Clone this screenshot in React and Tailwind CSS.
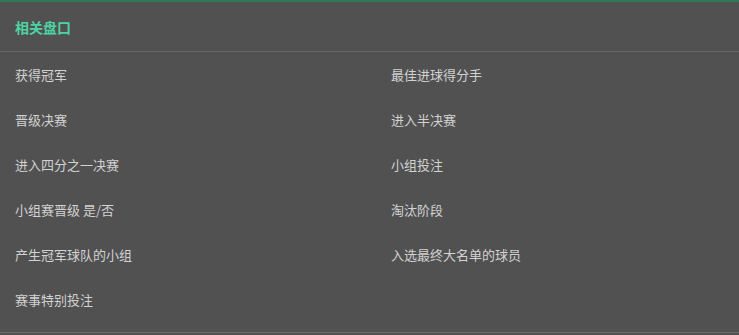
export default function App() {
  const items = [
    "获得冠军", "最佳进球得分手",
    "晋级决赛", "进入半决赛",
    "进入四分之一决赛", "小组投注",
    "小组赛晋级 是/否", "淘汰阶段",
    "产生冠军球队的小组", "入选最终大名单的球员",
    "赛事特别投注",
  ];
  return (
    <div
      className="w-[739px] h-[335px] bg-[#515151] flex flex-col"
      style={{ fontFamily: '"Noto Sans CJK SC", "Liberation Sans", sans-serif' }}
    >
      <div className="h-[2px] bg-[#2e7a58]" />
      <div className="h-[50px] flex items-center pl-[15px] border-b border-[#676767]">
        <span className="text-[14px] font-bold text-[#4ed3a5] leading-none">相关盘口</span>
      </div>
      <div className="grid grid-cols-[376px_1fr] pl-[15px] pb-[10px] border-b border-[#6a6a6a]">
        {items.map((t) => (
          <div key={t} className="h-[45px] flex items-center text-[13px] text-[#d2d2d2] leading-none">
            {t}
          </div>
        ))}
      </div>
    </div>
  );
}
